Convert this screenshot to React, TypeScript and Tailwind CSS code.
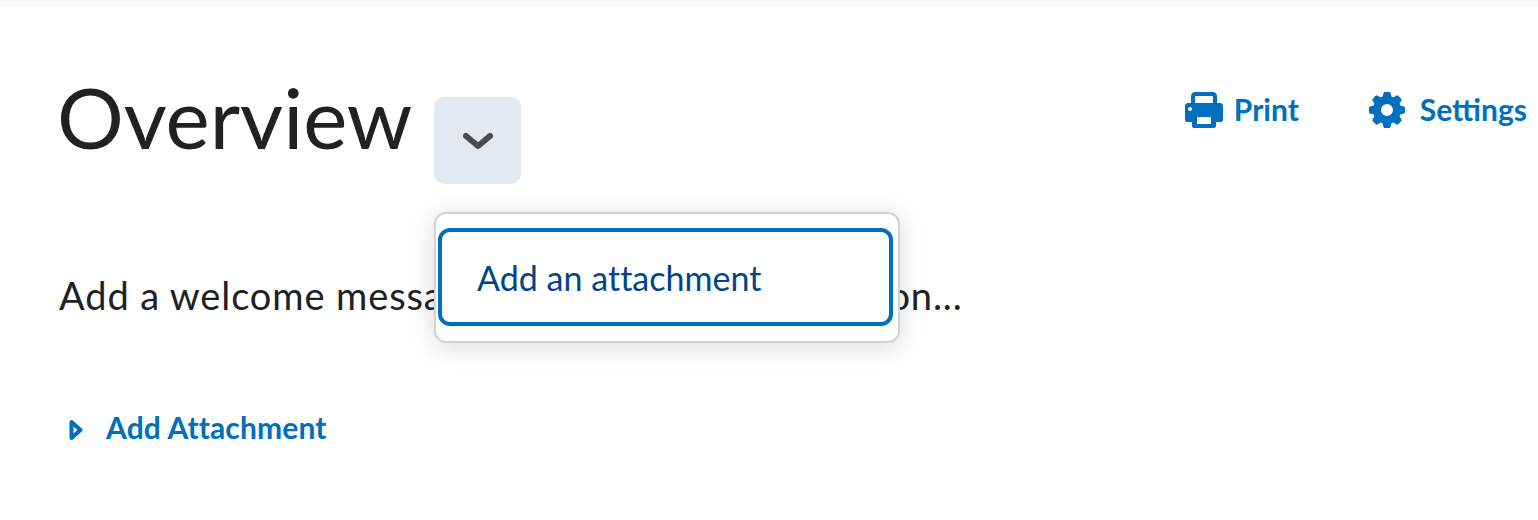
import React from 'react';

const BLUE = 'text-[#006fbf]';
const TEETH = [0, 45, 90, 135, 180, 225, 270, 315];

export default function App() {
  return (
    <div className="w-[1538px] h-[520px] overflow-hidden bg-white font-['Lato','Noto_Sans',sans-serif] text-[#202122]">
      <div className="h-[7px] bg-[#f9f9f9]" />

      <div className="flex items-start justify-between pl-[57px] pr-[11px] pt-[90px]">
        <div className="relative flex items-start">
          <h1 className="-mt-[6px] text-[83.5px] leading-[52px] font-normal">Overview</h1>
          <button className="ml-[22px] flex h-[87px] w-[87px] items-center justify-center rounded-[10px] bg-[#e3e9f1]">
            <svg width="30" height="20" viewBox="0 0 30 20" fill="none">
              <path d="M3 5l12 10L27 5" stroke="#494c4e" strokeWidth="6" strokeLinecap="round" strokeLinejoin="round" />
            </svg>
          </button>

          {/* dropdown */}
          <div className="absolute left-[377px] top-[115px] z-10 w-[466px] h-[131px] rounded-[12px] border-2 border-[#cdd5dc] bg-white p-[2px] shadow-[0_4px_24px_rgba(0,0,0,0.15)]">
            <div className="mt-[12px] flex h-[98px] w-[455px] items-center rounded-[12px] border-[4px] border-[#006fbf] pl-[35px] text-[34px] tracking-[0.03px] text-[#004489]">
              Add an attachment
            </div>
          </div>
        </div>

        <div className={`-mt-[10px] flex items-center gap-[69px] text-[30px] font-bold ${BLUE}`}>
          <span className="flex items-center gap-[11px]">
            <svg width="38" height="36" viewBox="0 0 38 36" fill="#006fbf">
              <path fillRule="evenodd" d="M6 4c0-2.200 1.800-4 4-4h18c2.200 0 4 1.800 4 4v7h-4V4H10v7H6V4zM3 11h32c1.700 0 3 1.300 3 3v14c0 1.100-.9 2-2 2h-5v4c0 1.100-.9 2-2 2H9c-1.100 0-2-.9-2-2v-4H2c-1.100 0-2-.9-2-2V14c0-1.700 1.300-3 3-3zm9 14v7h14v-7H12zM5 15a2 2 0 1 0 0 4 2 2 0 0 0 0-4z" />
            </svg>
            Print
          </span>
          <span className="flex items-center gap-[14px]">
            <svg width="38" height="36" viewBox="0 0 38 36" fill="#006fbf">
              <g transform="translate(19 18)">
                {TEETH.map((deg) => (
                  <path key={deg} d="M-4.500 -13L-3.500 -17a1.500 1.500 0 0 1 1.500 -1h4a1.500 1.500 0 0 1 1.500 1L4.500 -13z" transform={`rotate(${deg})`} />
                ))}
                <circle r="10" fill="none" stroke="#006fbf" strokeWidth="8" />
              </g>
            </svg>
            Settings
          </span>
        </div>
      </div>

      <p className="pl-[59px] pt-[88px] text-[38px] leading-[46px] tracking-[0.9px] whitespace-nowrap">
        Add a welcome message or the course description...
      </p>

      <div className={`flex items-center pl-[69px] pt-[91px] text-[30px] tracking-[0.13px] font-bold leading-[36px] ${BLUE}`}>
        <svg width="14" height="22" viewBox="0 0 14 22" fill="none" className="mt-[5px]">
          <path d="M2.500 3v16l9-8z" stroke="#006fbf" strokeWidth="4" strokeLinejoin="round" />
        </svg>
        <span className="ml-[23px]">Add Attachment</span>
      </div>
    </div>
  );
}
